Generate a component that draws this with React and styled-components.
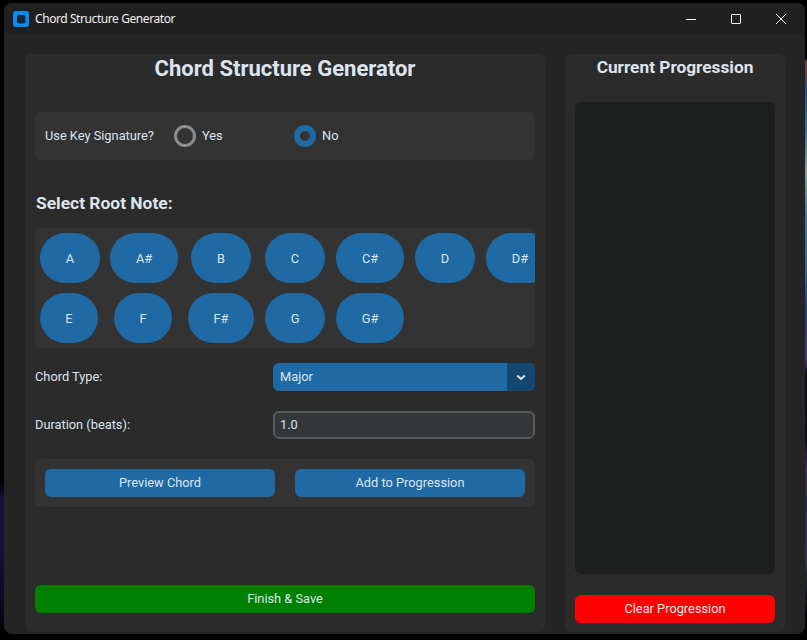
import React from "react";
import styled, { createGlobalStyle } from "styled-components";

const Global = createGlobalStyle`
  html, body { margin: 0; padding: 0; height: 100%; background: #000; overflow: hidden; }
  body { font-family: Roboto, "Liberation Sans", sans-serif; color: #dce4ee; font-size: 12.8px; }
  #root { height: 100%; }
`;

const Desktop = styled.div`
  width: 807px;
  height: 640px;
  padding: 3px 2px 6px 4px;
  box-sizing: border-box;
  background:
    linear-gradient(180deg, #000 0, #000 58px, #6a4040 62px, #6a4040 72px, #2c4f8a 88px, #3a7590 130px, #8a9a9a 170px, #3f7a90 220px, #3a6590 270px, #243f80 310px, #4a3a60 360px, #120a18 375px, #1a1020 440px, #3a2a50 470px, #2a2a44 500px, #30324a 560px, #000 625px) right top / 2px 100% no-repeat,
    linear-gradient(180deg, #000 0, #000 480px, #14143a 500px, #12123a 550px, #0a0a1e 600px, #000 640px) left top / 4px 100% no-repeat,
    #000;
`;

const Window = styled.div`
  height: 100%;
  display: flex;
  flex-direction: column;
  background: #242424;
  border-radius: 8px;
  overflow: hidden;
`;

const TitleBar = styled.header`
  height: 31px;
  flex: none;
  display: flex;
  align-items: center;
  background: #202020;
  padding-left: 9px;
`;

const AppIcon = styled.svg`
  width: 16px;
  height: 16px;
  flex: none;
`;

const WindowTitle = styled.span`
  margin-left: 6px;
  font: 12px "Noto Sans", sans-serif;
  letter-spacing: -0.42px;
  color: #f0f0f0;
`;

const WindowControls = styled.div`
  margin-left: auto;
  margin-right: 1px;
  display: flex;
  align-items: center;
`;

const ControlButton = styled.div`
  width: ${(p) => p.$w || 45}px;
  height: 31px;
  display: flex;
  align-items: center;
  justify-content: center;
`;

const Content = styled.main`
  flex: 1;
  min-height: 0;
  display: flex;
  gap: 20px;
  padding: 20px 20px 2px 21px;
`;

const Panel = styled.section`
  width: ${(p) => p.$width}px;
  flex: none;
  box-sizing: border-box;
  background: #2b2b2b;
  border-radius: 6px;
  padding: 0 10px;
  display: flex;
  flex-direction: column;
  color: #dce4ee;
`;

const Heading = styled.h1`
  margin: 0;
  text-align: center;
  font-family: Roboto, sans-serif;
  font-weight: 700;
  font-size: ${(p) => p.$size}px;
  line-height: ${(p) => p.$lh}px;
  height: 28px;
`;

const KeyRow = styled.div`
  margin-top: 30px;
  height: 48px;
  border-radius: 6px;
  background: #333333;
  display: flex;
  align-items: center;
  padding-left: 10px;
`;

const RadioLabel = styled.span`
  width: 129px;
  padding-bottom: 1px;
`;

const RadioOption = styled.label`
  width: 120px;
  display: flex;
  align-items: center;
  gap: 6px;
`;

const RadioText = styled.span`
  padding-bottom: 1px;
`;

const RadioMark = styled.span`
  width: 22px;
  height: 22px;
  box-sizing: border-box;
  border-radius: 50%;
  border: ${(p) => (p.$on ? "6px solid #1f6aa5" : "3px solid #8a8d91")};
`;

const SectionLabel = styled.h2`
  margin: 33px 0 0 1px;
  height: 21px;
  font-family: Roboto, sans-serif;
  font-size: 17.4px;
  font-weight: 700;
  line-height: 21px;
`;

const NoteGrid = styled.div`
  margin-top: 14px;
  height: 120px;
  box-sizing: border-box;
  border-radius: 6px;
  background: #333333;
  padding: 5px;
  overflow: hidden;
  display: grid;
  grid-template-columns: 60px 68px 67px 61px 69px 61px 68px;
  grid-auto-rows: 50px;
  gap: 10px;
`;

const NoteButton = styled.button`
  width: ${(p) => p.$w}px;
  height: 50px;
  padding: 0;
  margin-left: ${(p) => p.$inset || 0}px;
  justify-self: start;
  border: 0;
  border-radius: 25px;
  background: #1f6aa5;
  color: #dce4ee;
  font: 12.8px Roboto, sans-serif;
`;

const FieldRow = styled.div`
  margin-top: ${(p) => p.$mt}px;
  height: 28px;
  display: flex;
  align-items: center;
`;

const FieldLabel = styled.span`
  width: 238px;
  padding-bottom: 2px;
`;

const Select = styled.div`
  flex: 1;
  height: 28px;
  display: flex;
  border-radius: 6px;
  overflow: hidden;
  background: #1f6aa5;
  align-items: center;
`;

const SelectValue = styled.span`
  flex: 1;
  padding: 0 0 1px 7px;
`;

const SelectArrow = styled.span`
  width: 28px;
  height: 100%;
  background: #144870;
  display: flex;
  align-items: center;
  justify-content: center;
`;

const Entry = styled.div`
  flex: 1;
  height: 28px;
  box-sizing: border-box;
  border: 2px solid #565b5e;
  border-radius: 6px;
  background: #343638;
  padding-left: 5px;
  line-height: 24px;
`;

const ActionRow = styled.div`
  margin-top: 20px;
  height: 48px;
  border-radius: 6px;
  background: #333333;
  box-sizing: border-box;
  padding: 10px;
  display: flex;
  gap: 20px;
`;

const Button = styled.button`
  flex: ${(p) => (p.$wide ? "none" : 1)};
  width: ${(p) => (p.$wide ? "100%" : "auto")};
  height: 28px;
  box-sizing: border-box;
  padding: 0 0 2px;
  border: 0;
  border-radius: 6px;
  background: ${(p) => p.$bg};
  color: #dce4ee;
  font: 12.8px Roboto, sans-serif;
`;

const BottomSlot = styled.div`
  margin-top: auto;
  padding-bottom: ${(p) => p.$pb}px;
`;

const ProgressionBox = styled.div`
  margin-top: 20px;
  height: 472px;
  border-radius: 6px;
  background: #1d1e1e;
`;

const rowOne = [["A", 60], ["A#", 68], ["B", 60, 3], ["C", 60], ["C#", 68], ["D", 60], ["D#", 68]];
const rowTwo = [["E", 58], ["F", 58, 4], ["F#", 66], ["G", 60], ["G#", 68]];

export default function App() {
  return (
    <>
      <Global />
      <Desktop>
        <Window>
          <TitleBar>
            <AppIcon viewBox="0 0 16 16">
              <rect width="16" height="16" rx="3" fill="#0a8cf0" />
              <rect x="4" y="4" width="8.5" height="8.5" rx="2" fill="#16293a" />
            </AppIcon>
            <WindowTitle>Chord Structure Generator</WindowTitle>
            <WindowControls>
              <ControlButton>
                <svg width="12" height="12" viewBox="0 0 12 12"><path d="M1 6.5h10" stroke="#f2f2f2" strokeWidth="1" /></svg>
              </ControlButton>
              <ControlButton>
                <svg width="12" height="12" viewBox="0 0 12 12" fill="none"><rect x="1.5" y="1.5" width="9" height="9" rx="0.5" stroke="#f2f2f2" /></svg>
              </ControlButton>
              <ControlButton $w={46}>
                <svg width="12" height="12" viewBox="0 0 12 12"><path d="M1 1l10 10M11 1L1 11" stroke="#f2f2f2" strokeWidth="1" /></svg>
              </ControlButton>
            </WindowControls>
          </TitleBar>
          <Content>
            <Panel $width={520}>
              <Heading $size={22} $lh={29}>Chord Structure Generator</Heading>
              <KeyRow>
                <RadioLabel>Use Key Signature?</RadioLabel>
                <RadioOption><RadioMark /><RadioText>Yes</RadioText></RadioOption>
                <RadioOption><RadioMark $on /><RadioText>No</RadioText></RadioOption>
              </KeyRow>
              <SectionLabel>Select Root Note:</SectionLabel>
              <NoteGrid>
                {rowOne.map(([n, w, i]) => <NoteButton key={n} $w={w} $inset={i}>{n}</NoteButton>)}
                {rowTwo.map(([n, w, i]) => <NoteButton key={n} $w={w} $inset={i}>{n}</NoteButton>)}
              </NoteGrid>
              <FieldRow $mt={15}>
                <FieldLabel>Chord Type:</FieldLabel>
                <Select>
                  <SelectValue>Major</SelectValue>
                  <SelectArrow>
                    <svg width="10" height="7" viewBox="0 0 10 7" fill="none"><path d="M1.2 1.5L5 5l3.8-3.5" stroke="#dce4ee" strokeWidth="2" /></svg>
                  </SelectArrow>
                </Select>
              </FieldRow>
              <FieldRow $mt={20}>
                <FieldLabel>Duration (beats):</FieldLabel>
                <Entry>1.0</Entry>
              </FieldRow>
              <ActionRow>
                <Button $bg="#1f6aa5">Preview Chord</Button>
                <Button $bg="#1f6aa5">Add to Progression</Button>
              </ActionRow>
              <BottomSlot $pb={19}>
                <Button $wide $bg="#008000">Finish &amp; Save</Button>
              </BottomSlot>
            </Panel>
            <Panel $width={220}>
              <Heading $size={17.3} $lh={26}>Current Progression</Heading>
              <ProgressionBox />
              <BottomSlot $pb={9}>
                <Button $wide $bg="#ff0000">Clear Progression</Button>
              </BottomSlot>
            </Panel>
          </Content>
        </Window>
      </Desktop>
    </>
  );
}
